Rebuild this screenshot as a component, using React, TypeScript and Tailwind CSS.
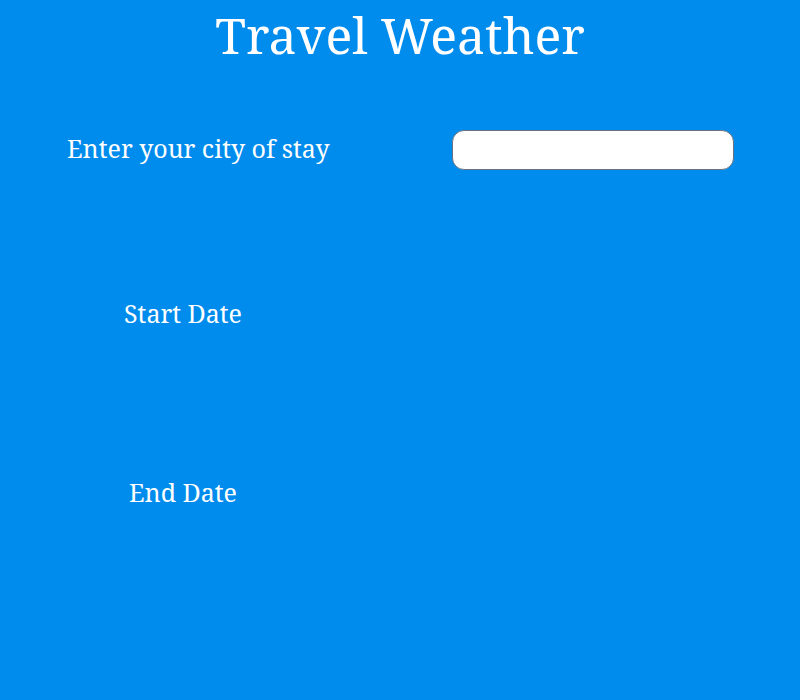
import React, { useState } from 'react';

function App() {
    const [city, setCity] = useState('');

    return (
        <div className="min-h-[700px] w-full bg-[#008cec] text-white font-['Noto_Serif','DejaVu_Serif',serif]">
            <h1 className="pt-[3px] text-center text-[50px] leading-[64px]">Travel Weather</h1>
            <div className="mt-[63px] flex items-center">
                <label className="ml-[67px] w-[385px] text-[25px] leading-[32px] -translate-y-[2px]">Enter your city of stay</label>
                <input
                    type="text"
                    value={city}
                    onChange={(e) => setCity(e.target.value)}
                    className="h-[40px] w-[282px] rounded-[12px] border border-gray-500 bg-white px-3 text-black outline-none"
                />
            </div>
            <div className="mt-[127px] w-[366px] text-center text-[25px] leading-[32px]">Start Date</div>
            <div className="mt-[147px] w-[366px] text-center text-[25px] leading-[32px]">End Date</div>
        </div>
    );
}

export default App;
